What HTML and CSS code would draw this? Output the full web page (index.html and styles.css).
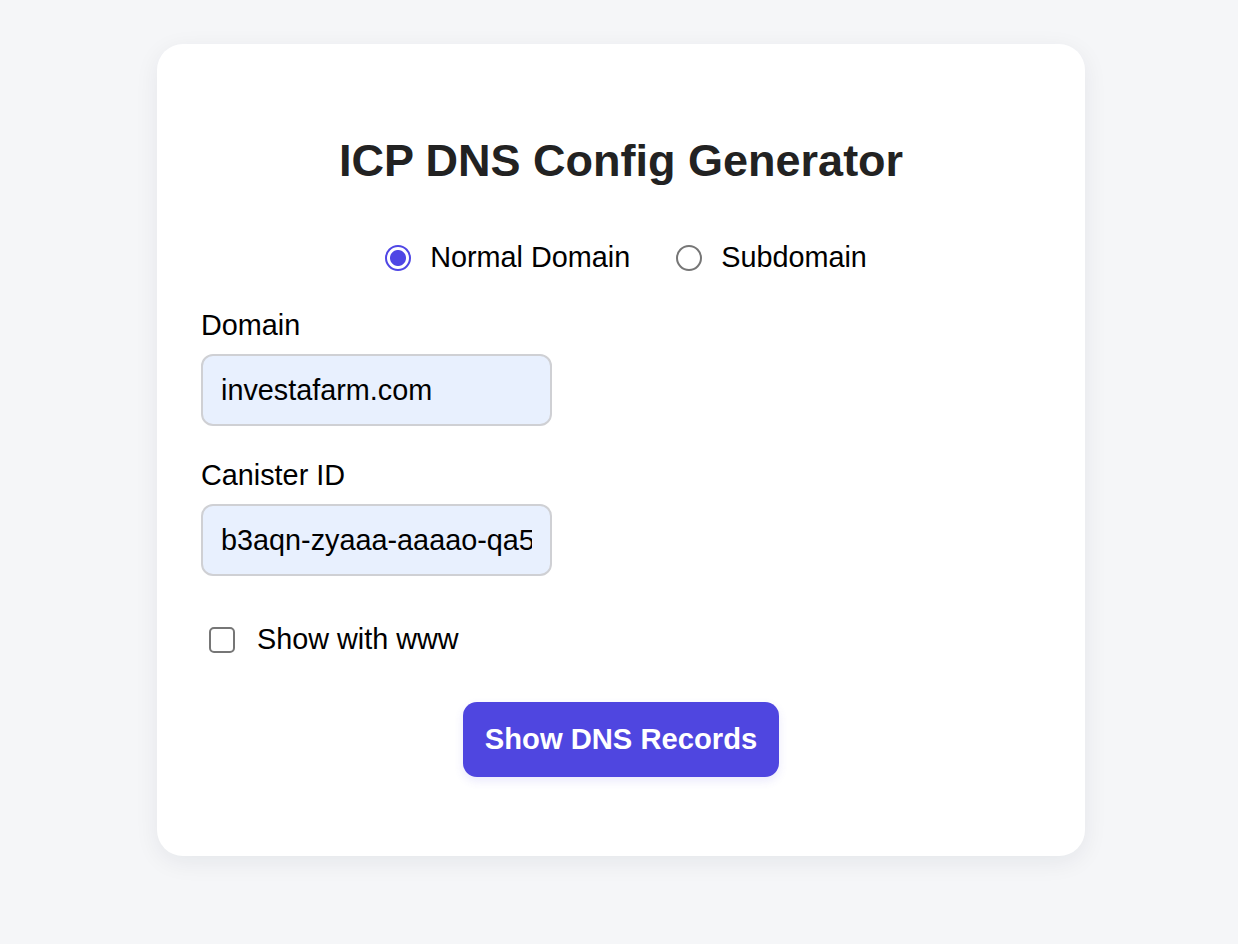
FILE: index.html
```html
<!DOCTYPE html>
<html lang="en">
<head>
<meta charset="utf-8">
<title>ICP DNS Config Generator</title>
<link rel="stylesheet" href="styles.css">
</head>
<body>
<main class="card">
  <h1 class="title">ICP DNS Config Generator</h1>
  <div class="radio-group">
    <label class="radio-item"><input type="radio" name="type" class="radio" checked><span>Normal Domain</span></label>
    <label class="radio-item"><input type="radio" name="type" class="radio"><span>Subdomain</span></label>
  </div>
  <div class="field">
    <label class="field-label" for="domain">Domain</label>
    <input id="domain" class="text-input" type="text" value="investafarm.com">
  </div>
  <div class="field">
    <label class="field-label" for="canister">Canister ID</label>
    <input id="canister" class="text-input" type="text" value="b3aqn-zyaaa-aaaao-qa5ba-cai">
  </div>
  <label class="check-row"><input type="checkbox" class="checkbox"><span>Show with www</span></label>
  <div class="actions">
    <button class="primary-btn" type="button">Show DNS Records</button>
  </div>
</main>
</body>
</html>
```

FILE: styles.css
```css
* { box-sizing: border-box; }

html, body {
  margin: 0;
  background: #f5f6f8;
  font-family: "Liberation Sans", Arial, Helvetica, sans-serif;
  color: #000;
}

body {
  padding: 44px 0 88px 4px;
}

.card {
  width: 928px;
  margin: 0 auto;
  background: #fff;
  border-radius: 26px;
  box-shadow: 0 6px 24px rgba(20, 30, 60, 0.07);
  padding: 90px 44px 79px;
}

.title {
  margin: 0;
  text-align: center;
  font-size: 45px;
  font-weight: 700;
  line-height: 53px;
  color: #222;
}

.radio-group {
  margin-top: 54px;
  display: flex;
  justify-content: center;
  gap: 46px;
  padding-left: 10px;
  font-size: 28.8px;
  line-height: 33px;
}

.radio-item {
  display: flex;
  align-items: center;
  gap: 19px;
  cursor: pointer;
}

.radio {
  appearance: none;
  -webkit-appearance: none;
  margin: 0;
  width: 26px;
  height: 26px;
  border-radius: 50%;
  border: 2px solid #767676;
  background: #fff;
}

.radio:checked {
  border-color: #4f46e5;
  background: radial-gradient(circle, #4f46e5 0 7.5px, #fff 8.5px);
}

.field {
  margin-top: 35px;
  display: flex;
  flex-direction: column;
  align-items: flex-start;
}

.field + .field {
  margin-top: 33px;
}

.field-label {
  font-size: 28.8px;
  line-height: 33px;
}

.text-input {
  margin-top: 12px;
  width: 351px;
  height: 72px;
  padding: 0 18px;
  border: 2px solid #cfd0d4;
  border-radius: 12px;
  background: #e8f0fe;
  font-family: inherit;
  font-size: 28.8px;
  color: #000;
  outline: none;
}

.check-row {
  margin-top: 47px;
  margin-left: 8px;
  display: flex;
  align-items: center;
  gap: 22px;
  font-size: 28.8px;
  line-height: 33px;
}

.checkbox {
  appearance: none;
  -webkit-appearance: none;
  margin: 0;
  width: 26px;
  height: 26px;
  border: 2px solid #767676;
  border-radius: 5px;
  background: #fff;
}

.actions {
  margin-top: 46px;
  display: flex;
  justify-content: center;
}

.primary-btn {
  width: 316px;
  height: 75px;
  border: none;
  border-radius: 14px;
  background: #4f46e0;
  color: #fff;
  font-family: inherit;
  font-size: 29.2px;
  font-weight: 700;
  box-shadow: 0 4px 10px rgba(79, 70, 229, 0.12);
  cursor: pointer;
}
```
